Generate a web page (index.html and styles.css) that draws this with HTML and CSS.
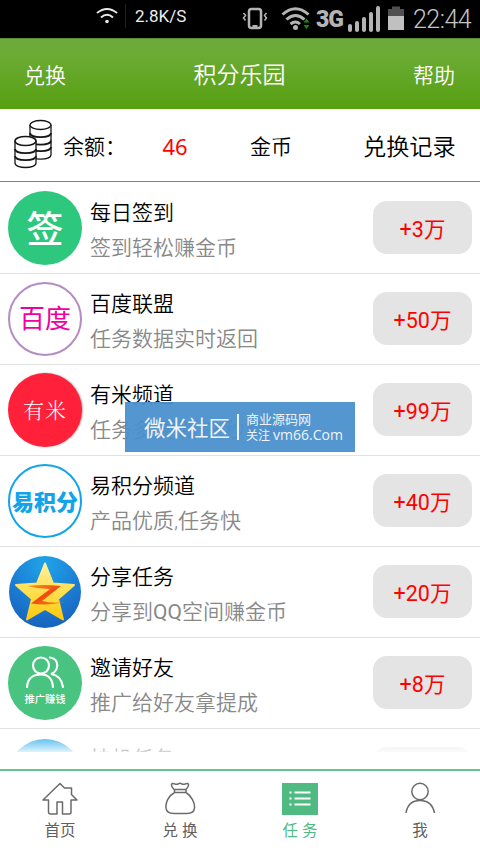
FILE: index.html
```html
<!DOCTYPE html>
<html lang="zh-CN">
<head>
<meta charset="utf-8">
<title>积分乐园</title>
<link rel="stylesheet" href="styles.css">
</head>
<body>
<div class="app">
  <div class="status">
    <svg class="st-wifi" width="22" height="18" viewBox="0 0 22 18" fill="none" stroke="#e8e8e8" stroke-width="2"><path d="M1 6Q11-2 21 6M5 10.5Q11 5 17 10.5"/><circle cx="11" cy="14.5" r="1.8" fill="#e8e8e8" stroke="none"/></svg>
    <span class="st-line"></span>
    <span class="speed">2.8K/S</span>
    <svg class="st-icons" width="164" height="32" viewBox="0 0 164 32" fill="none" stroke="#b4b4b4">
      <rect x="7" y="8" width="12" height="19" rx="2.5" stroke-width="2.5"/><path d="M10.500 25H15.500" stroke-width="2"/><path d="M1.500 12l2 2.500-2 2.500 2 2.500M24.500 12l-2 2.500 2 2.500-2 2.500" stroke-width="1.500"/>
      <path d="M40.500 13.500Q53.500 2 66.500 13.500M44.500 18.500Q53.500 10.500 62.500 18.500M48.500 23Q53.500 19 58 23" stroke-width="3"/><circle cx="53.500" cy="26.500" r="2.500" fill="#b4b4b4" stroke="none"/>
      <path d="M61.500 21.500l3-4 3 4zM61.500 24h6l-3 4z" fill="#188a10" stroke="none"/>
      <path d="M108 25v4M115 22v7M122 18v11M129 13v16M136 7v22" stroke-width="4" stroke-linecap="round"/>
      <path d="M148 8h4V5.500h8V8h4v8h-16z" fill="#505050" stroke="none" transform="translate(-2 0)"/><path d="M146 15h16v14h-16z" fill="#c0c0c0" stroke="none"/>
    </svg>
    <span class="net">3G</span>
    <span class="clock">22:44</span>
  </div>
  <header class="header"><span class="left">兑换</span><h1>积分乐园</h1><span class="right">帮助</span></header>
  <section class="balance">
    <svg class="coins" width="39" height="50" viewBox="0 0 39 50" fill="#fff" stroke="#161616" stroke-width="1.300">
      <path d="M16 6v30c0 5.500 21 5.500 21 0V6"/><path d="M16 28c0 5.500 21 5.500 21 0M16 21.500c0 5.500 21 5.500 21 0M16 14c0 5.500 21 5.500 21 0" fill="none" stroke-width="1.900"/><ellipse cx="26.500" cy="6" rx="10.500" ry="4.500"/>
      <path d="M1 22v22c0 6 21 6 21 0V22"/><path d="M1 37c0 5.500 21 5.500 21 0M1 30c0 5.500 21 5.500 21 0" fill="none" stroke-width="1.900"/><ellipse cx="11.500" cy="22" rx="10.500" ry="4.500" stroke-width="1.600"/>
    </svg>
    <span class="b-label">余额：</span><span class="b-num">46</span><span class="b-unit">金币</span><span class="b-log">兑换记录</span>
  </section>
  <main class="list">
    <article class="row"><div class="icon sign">签</div><div class="txt"><h2>每日签到</h2><p>签到轻松赚金币</p></div><div class="pill">+3万</div></article>
    <article class="row"><div class="icon baidu"><span>百度</span></div><div class="txt"><h2>百度联盟</h2><p>任务数据实时返回</p></div><div class="pill">+50万</div></article>
    <article class="row"><div class="icon youmi">有米</div><div class="txt"><h2>有米频道</h2><p>任务多,更新快,秒到账</p></div><div class="pill">+99万</div></article>
    <article class="row"><div class="icon yjf"><span>易积分</span></div><div class="txt"><h2>易积分频道</h2><p>产品优质,任务快</p></div><div class="pill">+40万</div></article>
    <article class="row">
      <svg class="icon" width="74" height="74" viewBox="0 0 74 74">
        <defs><radialGradient id="blue" cx=".5" cy=".1" r=".9"><stop offset="0" stop-color="#20a4e8"/><stop offset=".6" stop-color="#1b7bd3"/><stop offset="1" stop-color="#1763bd"/></radialGradient><linearGradient id="gold" x1="0" y1="0" x2="0" y2="1"><stop offset="0" stop-color="#fff0a0"/><stop offset=".5" stop-color="#ffe050"/><stop offset="1" stop-color="#ffc80a"/></linearGradient><linearGradient id="zed" x1="0" y1="0" x2="1" y2="1"><stop offset="0" stop-color="#ff9a20"/><stop offset=".5" stop-color="#f04a10"/><stop offset="1" stop-color="#ff8a10"/></linearGradient></defs>
        <circle cx="37" cy="37" r="36" fill="url(#blue)"/>
        <path d="M37 8.500L45 28.500 66 30 50 44 55 64.500 37 54 19 64.500 24 44 8 30 29 28.500z" fill="url(#gold)" stroke="url(#gold)" stroke-width="2" stroke-linejoin="round"/>
        <path d="M19 31Q36 29 53 31L34 46Q45 49 56 47 42 51 23 48.500L42 34Q30 34 19 31z" fill="url(#zed)"/>
      </svg>
      <div class="txt"><h2>分享任务</h2><p>分享到<span class="latin">QQ</span>空间赚金币</p></div><div class="pill">+20万</div></article>
    <article class="row"><div class="icon invite"><svg width="40" height="34" viewBox="0 0 40 34" fill="none" stroke="#fff" stroke-width="2.200" stroke-linecap="round"><circle cx="16" cy="9.500" r="8"/><path d="M2 31Q3 18.500 16 18.500 27 18.500 28 31M25 1.500c10 1 9 14 1 16.500 7 1 11 6 12 13"/></svg><span>推广赚钱</span></div><div class="txt"><h2>邀请好友</h2><p>推广给好友拿提成</p></div><div class="pill">+8万</div></article>
    <article class="row"><div class="icon hang"></div><div class="txt"><h2>挂机任务</h2></div><div class="pill"></div></article>
  </main>
  <nav class="tabs">
    <a class="tab"><svg width="36" height="34" viewBox="0 0 36 34" fill="none" stroke="#6b6b6b" stroke-width="1.500" stroke-linejoin="round"><path d="M18 1.500L1 18h5.500v12q0 2 2 2H15V20h5.500v12H27q2 0 2-2V18h6L29.500 12.500V6h-7z"/></svg><span>首页</span></a>
    <a class="tab"><svg width="36" height="34" viewBox="0 0 36 34" fill="none" stroke="#6b6b6b" stroke-width="1.500" stroke-linejoin="round"><path d="M12 7.500C8 3 9 .5 13 2q2 .6 3 0 2-1.500 4 0 1 .6 3 0c4-1.500 5 1 1 5.500M12 7.500h12.500M12 10.500h12.500M12.500 7.500v3C6 14 3.500 21 4 26q.5 5.500 8 5.500h13q7 0 7.500-5.500C33 21 29.500 14 24 10.500v-3"/></svg><span>兑 换</span></a>
    <a class="tab on"><svg width="36" height="34" viewBox="0 0 36 34"><path d="M0 1h36v32H0z" fill="#4fbb83"/><path d="M12.500 10.500h16M12.500 16.500h16M12.500 22.500h16M7.500 10.500h2M7.500 16.500h2M7.500 22.500h2" stroke="#fff" stroke-width="2"/></svg><span>任 务</span></a>
    <a class="tab"><svg width="36" height="34" viewBox="0 0 36 34" fill="none" stroke="#6b6b6b" stroke-width="1.500"><circle cx="18" cy="9.500" r="8.200"/><path d="M4 31Q6 18.500 18 18.500T32.500 31"/></svg><span>我</span></a>
  </nav>
  <div class="banner"><b>微米社区</b><i></i><div class="b-small"><span>商业源码网</span><span>关注 <em>vm66.Com</em></span></div></div>
</div>
</body>
</html>
```
FILE: styles.css
```css
* { box-sizing: border-box; }
body { margin: 0; background: #fff; font-family: Roboto, "Noto Sans CJK SC", sans-serif; color: #000; }
h1, h2, p { margin: 0; font-weight: 350; }
.app { position: relative; width: 480px; height: 854px; overflow: hidden; display: flex; flex-direction: column; font-weight: 350; }
.status { position: relative; height: 38px; flex: none; background: #000; color: #eee; }
.st-wifi { position: absolute; left: 96px; top: 7px; }
.st-line { position: absolute; left: 125px; top: 4px; width: 1px; height: 24px; background: #1c2a0c; }
.speed { position: absolute; left: 135px; top: 6px; font-size: 17px; line-height: 20px; font-weight: 400; }
.st-icons { position: absolute; left: 242px; top: 1px; }
.net { position: absolute; left: 316px; top: 7px; font-size: 23px; line-height: 26px; font-weight: 900; color: #b4b4b4; letter-spacing: -1px; }
.clock { position: absolute; left: 413px; top: 5px; font-size: 25px; line-height: 30px; color: #c4c4c4; letter-spacing: -.500px; }
.header { height: 71px; flex: none; display: grid; grid-template-columns: 1fr auto 1fr; align-items: center; padding: 0 25px 0 24px; color: #fff; background: linear-gradient(#6faa3c, #6cab36 20%, #56a010); font-size: 21px; border-top: 1px solid #5a8f2e; }
.header h1 { font-size: 23px; margin-top: -2px; }
.header .right { text-align: right; }
.balance { height: 73px; flex: none; display: flex; align-items: center; border-bottom: 1px solid #808080; font-size: 21px; padding-left: 14px; }
.coins { flex: none; margin-top: -3px; }
.b-label { width: 84px; margin-left: 10px; }
.b-num { width: 76px; text-align: center; color: #f00; font: 400 22px "Noto Sans", sans-serif; margin-left: -10px; padding-top: 1px; }
.b-unit { margin-left: 37px; }
.b-log { margin-left: 71px; font-size: 23.200px; }
.list { height: 570px; flex: none; padding-top: 1px; overflow: hidden; position: relative; }
.list::after { content: ""; position: absolute; left: 0; right: 0; top: 550px; height: 20px; background: linear-gradient(rgba(255,255,255,0), rgba(255,255,255,.85)); }
.row { height: 91px; display: flex; align-items: center; border-bottom: 1px solid #e2e2e2; padding: 0 8px; }
.icon { width: 74px; height: 74px; flex: none; border-radius: 50%; display: flex; align-items: center; justify-content: center; }
.txt { flex: 1; margin-left: 8px; height: 74px; white-space: nowrap; }
.txt h2 { font-size: 21px; line-height: 34px; margin-top: 5px; }
.txt p { font-size: 21px; line-height: 35px; margin-top: 1px; color: #888; }
.latin { font-weight: 400; }
.pill { width: 99px; height: 53px; flex: none; border-radius: 14px; background: #e4e4e4; color: #f00; font-size: 21.500px; font-weight: 400; display: flex; align-items: center; justify-content: center; margin-top: -2px; padding-top: 1px; }
.sign { background: #2ec77e; color: #fff; font-size: 37px; font-weight: 500; padding-bottom: 3px; }
.baidu { border: 2px solid #b48cc4; color: #f000a0; font-size: 26px; font-weight: 400; }
.baidu span { margin-top: -6px; }
.youmi { background: #ff203a; color: #fff; font-size: 21px; font-family: "Noto Serif CJK SC", "Noto Sans CJK SC", serif; box-shadow: 1px 0 2px #aaa; letter-spacing: 1px; padding-bottom: 3px; }
.yjf { border: 2px solid #12a4ea; color: #12a4ea; font-weight: 900; font-size: 22px; }
.yjf span { margin-top: -3px; }
.invite { background: #48c380; color: #fff; flex-direction: column; }
.invite svg { margin-top: -3px; }
.invite span { font-size: 10.300px; line-height: 14px; margin-top: 3px; font-weight: 500; }
.hang { background: #24aae8; margin-top: 3px; }
.tabs { flex: 1; margin-top: 17px; border-top: 2px solid #62c792; display: grid; grid-template-columns: repeat(4, 1fr); }
.tab { display: flex; flex-direction: column; align-items: center; padding-top: 11px; color: #606060; font-size: 15.500px; font-weight: 400; }
.tab span { line-height: 20px; margin-top: 5px; }
.tab.on { color: #4fbb83; }
.banner { position: absolute; left: 125px; top: 402px; width: 230px; height: 50px; background: rgba(73,143,205,.94); color: #eff3f8; display: flex; align-items: center; padding: 0 0 1px 19px; }
.banner b { font-size: 21.500px; font-weight: 400; }
.banner i { width: 2px; height: 26px; background: #eff3f8; margin: 0 7px; }
.b-small { display: flex; flex-direction: column; font-size: 13px; line-height: 15px; font-weight: 400; white-space: nowrap; margin-top: 2px; }
.b-small span:last-child { font-size: 12px; }
.b-small em { font: 14px/15px "Open Sans", sans-serif; }
```
